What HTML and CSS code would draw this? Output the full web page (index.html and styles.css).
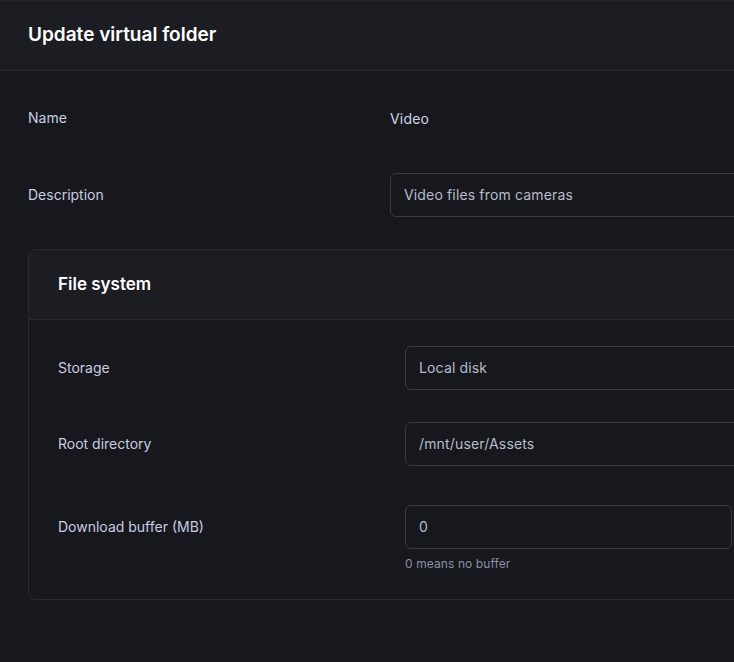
FILE: index.html
```html
<!DOCTYPE html>
<html>
<head>
<meta charset="utf-8">
<link rel="stylesheet" href="styles.css">
</head>
<body>
<div class="page">
  <div class="header">
    <h1 class="title">Update virtual folder</h1>
  </div>
  <div class="body">
    <div class="row">
      <div class="label">Name</div>
      <div class="value static">Video</div>
    </div>
    <div class="row">
      <div class="label">Description</div>
      <div class="value"><div class="input">Video files from cameras</div></div>
    </div>
    <div class="card">
      <div class="card-header">
        <h2 class="card-title">File system</h2>
      </div>
      <div class="card-body">
        <div class="row inner">
          <div class="label">Storage</div>
          <div class="value"><div class="input">Local disk</div></div>
        </div>
        <div class="row inner">
          <div class="label">Root directory</div>
          <div class="value"><div class="input">/mnt/user/Assets</div></div>
        </div>
        <div class="row inner spaced">
          <div class="label">Download buffer (MB)</div>
          <div class="value">
            <div class="input narrow">0</div>
            <div class="hint">0 means no buffer</div>
          </div>
        </div>
      </div>
    </div>
  </div>
</div>
</body>
</html>
```

FILE: styles.css
```css
html, body {
  margin: 0;
  padding: 0;
  background: #17181d;
  overflow: hidden;
}
body {
  font-family: Inter, "Noto Sans", sans-serif;
  color: #c8cbdc;
}
.page {
  width: 1500px;
  min-height: 662px;
  background: #17181d;
}
.header {
  height: 69px;
  background: #1c1d22;
  border-top: 1px solid #24252b;
  border-bottom: 1px solid #2a2b31;
  display: flex;
  align-items: center;
  padding: 0 28px;
}
.title {
  margin: 0;
  font-size: 19px;
  font-weight: 600;
  color: #ffffff;
  letter-spacing: 0px;
  position: relative;
  top: -1px;
}
.body {
  padding: 25px 28px 40px;
  display: flex;
  flex-direction: column;
  gap: 33px;
}
.row {
  display: grid;
  grid-template-columns: 362px 1fr;
  align-items: start;
}
.row.inner {
  grid-template-columns: 347px 1fr;
}
.label {
  font-size: 14px;
  line-height: 20px;
  padding-top: 12px;
  color: #c9cce0;
}
.value.static {
  font-size: 14px;
  line-height: 20px;
  padding-top: 13px;
  height: 31px;
  color: #d0d3e2;
  font-weight: 400;
  letter-spacing: 0.2px;
}
.input {
  box-sizing: border-box;
  height: 44px;
  border: 1px solid #393a41;
  border-radius: 6px;
  padding: 0 13px 1px;
  display: flex;
  align-items: center;
  font-size: 14px;
  letter-spacing: 0.15px;
  color: #b8bccd;
  background: #17181d;
}
.input.narrow {
  width: 327px;
}
.hint {
  margin-top: 7px;
  font-size: 12px;
  line-height: 16px;
  letter-spacing: 0.1px;
  color: #8a8fa6;
}
.card {
  border: 1px solid #2a2b31;
  border-radius: 8px;
  overflow: hidden;
  margin-top: -1px;
}
.card-header {
  height: 69px;
  background: #1c1d22;
  border-bottom: 1px solid #2a2b31;
  display: flex;
  align-items: center;
  padding: 0 29px;
}
.card-title {
  margin: 0;
  font-size: 17px;
  font-weight: 600;
  color: #ffffff;
  position: relative;
  top: -1px;
}
.card-body {
  padding: 26px 29px 27px;
  display: flex;
  flex-direction: column;
  gap: 32px;
}
.row.spaced {
  margin-top: 7px;
}
```
